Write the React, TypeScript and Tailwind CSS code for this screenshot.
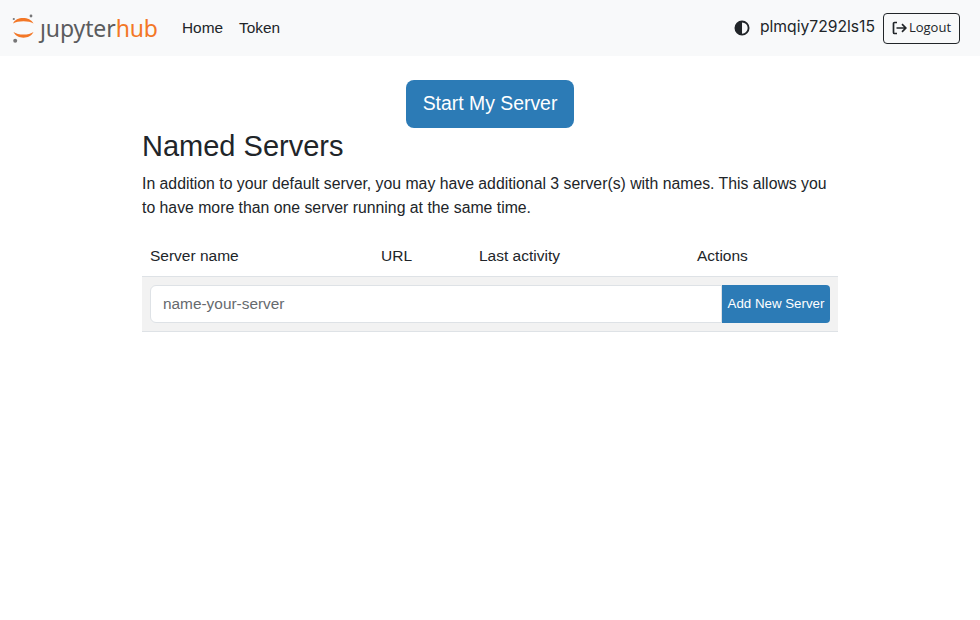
import React from "react";

function Half() {
  return (
    <svg width="16" height="16" viewBox="0 0 16 16" fill="currentColor">
      <path d="M8 0a8 8 0 1 0 0 16A8 8 0 0 0 8 0zm0 14V2a6 6 0 1 1 0 12z" transform="translate(0.5 0.5) scale(0.94)" />
    </svg>
  );
}

function Logo() {
  return (
    <div className="flex items-center h-[30px] w-[147px] gap-[5px]">
      <svg width="23" height="30" viewBox="0 0 23 30" className="shrink-0">
        <path d="M1 10.5C4 3.2 18 3.2 21.5 10.5C17 7.6 6 7.6 1 10.5Z" fill="#f37726" />
        <path d="M1.5 19C5 26.6 18 26.6 21.5 19C17 22.4 6 22.4 1.5 19Z" fill="#f37726" />
        <circle cx="19" cy="3" r="1.4" fill="#767677" />
        <circle cx="1.8" cy="6" r="1.1" fill="#767677" />
        <circle cx="3.2" cy="27.8" r="2" fill="#767677" />
      </svg>
      <span className="text-[23px] leading-[30px] font-['Noto_Sans',sans-serif] tracking-[-0.1px] text-[#5b5c5e]">
        ȷupyter<span className="text-[#f37726]">hub</span>
      </span>
    </div>
  );
}

export default function App() {
  return (
    <div className="min-h-[620px] bg-white font-['Liberation_Sans',sans-serif] text-[15.8px] text-[#212529]">
      <nav className="h-[56px] bg-[#f8f9fa] flex items-center pl-[12px] pr-[20px]">
        <Logo />
        <div className="flex ml-[23px] gap-[16px] text-[#212529] text-[15.4px]">
          <a>Home</a>
          <a>Token</a>
        </div>
        <div className="ml-auto flex items-center">
          <Half />
          <span className="ml-[10px] mb-[2px] text-[15.7px] font-['Inter',sans-serif]">plmqiy7292ls15</span>
          <button className="ml-[8px] h-[31px] w-[77px] border border-[#212529] rounded-[4px] text-[13px] flex items-center justify-center font-['Open_Sans',sans-serif]">
            <svg width="15" height="14" viewBox="0 0 15 14" fill="none" stroke="#212529" strokeWidth="1.7" className="mr-[2px]">
              <path d="M5 1.5H2.5a1 1 0 0 0-1 1v9a1 1 0 0 0 1 1H5" />
              <path d="M4.5 7h9M10 3.2 13.8 7 10 10.8" />
            </svg>
            Logout
          </button>
        </div>
      </nav>
      <main className="w-[696px] mx-auto">
        <div className="flex justify-center pt-[24px]">
          <button className="h-[48px] w-[168px] rounded-[8px] bg-[#2c7bb6] text-white text-[19.4px]">Start My Server</button>
        </div>
        <h1 className="text-[29px] leading-[36px] font-normal">Named Servers</h1>
        <p className="mt-[8px] leading-[24px]">
          In addition to your default server, you may have additional 3 server(s) with names. This allows you to have more than one server running at the same time.
        </p>
        <div className="mt-[16px] h-[41px] flex items-center border-b border-[#dee2e6] text-[#212529] text-[15.5px]">
          <span className="ml-[8px] w-[231px]">Server name</span>
          <span className="w-[98px]">URL</span>
          <span className="w-[218px]">Last activity</span>
          <span>Actions</span>
        </div>
        <div className="h-[55px] bg-[#f2f2f2] border-b border-[#dee2e6] flex items-center px-[8px]">
          <input
            placeholder="name-your-server"
            className="flex-1 h-[38px] px-[12px] bg-white border border-[#dee2e6] rounded-l-[6px] outline-none text-[15.4px] placeholder:text-[#666a6e]"
          />
          <button className="h-[38px] w-[108px] bg-[#2c7bb6] text-white text-[13.3px] rounded-r-[4px]">Add New Server</button>
        </div>
      </main>
    </div>
  );
}
